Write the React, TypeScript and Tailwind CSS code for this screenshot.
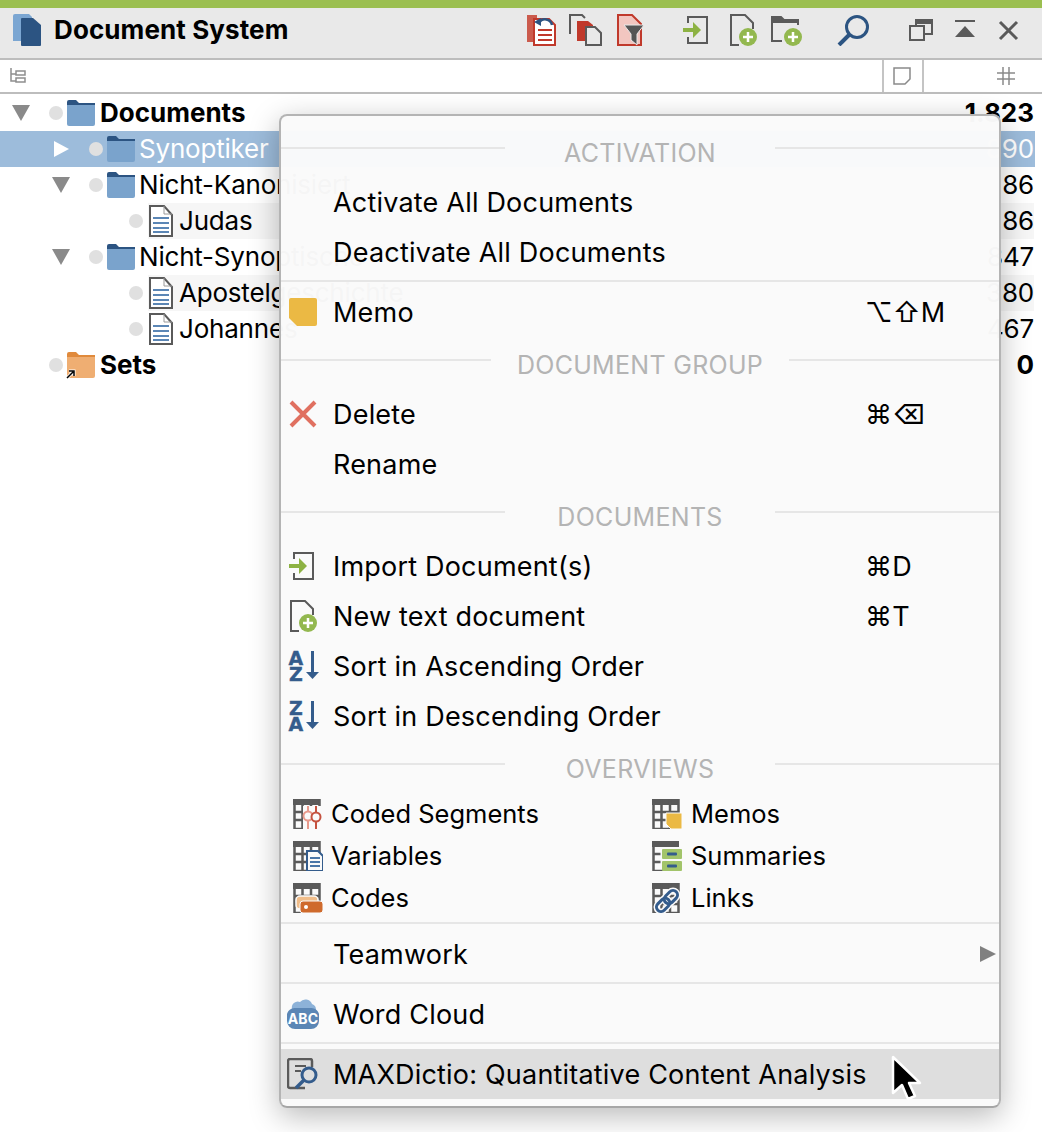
import type { ReactNode } from "react";

function Folder({ tab = "#2c5482", body = "#7aa3cc", shortcut }: { tab?: string; body?: string; shortcut?: boolean }) {
  return (
    <svg width="28" height="26" viewBox="0 0 28 26" className="shrink-0 overflow-visible">
      <path d="M0 6V2a2 2 0 0 1 2-2h7l3 3h16v4H0z" fill={tab} />
      <path d="M0 5h28v19a2 2 0 0 1-2 2H2a2 2 0 0 1-2-2z" fill={body} />
      {shortcut && (
        <>
          <path d="M0 26l6-6M2 19h5v5" fill="none" stroke="#fff" strokeWidth="3" />
          <path d="M0 26l6-6M2 19h5v5" fill="none" stroke="#000" strokeWidth="1.5" />
        </>
      )}
    </svg>
  );
}

function DocIcon() {
  return (
    <svg width="24" height="32" viewBox="0 0 24 32" className="shrink-0">
      <path d="M1 1h14l8 9v21H1z" fill="#fff" stroke="#5a5a5a" strokeWidth="2" />
      <path d="M15 1v8h8" fill="none" stroke="#9a9a9a" strokeWidth="1" />
      <path d="M4 13h16M4 18h16M4 23h16M4 27h16" stroke="#5b86b5" strokeWidth="2" />
    </svg>
  );
}

function TreeRow({
  indent,
  arrow,
  icon,
  label,
  count,
  bold,
  selected,
  doc,
  striped,
}: {
  indent: number;
  arrow?: "down" | "right";
  icon: ReactNode;
  label: string;
  count: string;
  bold?: boolean;
  selected?: boolean;
  doc?: boolean;
  striped?: boolean;
}) {
  return (
    <div
      className={`flex items-center h-[36px] pr-[1px] ${selected ? "bg-[#9dbcdb] text-white" : "text-black"} ${bold ? "font-bold tracking-normal" : ""}`}
    >
      <div className="flex items-center shrink-0" style={{ marginLeft: indent }}>
        <span className="w-[49px] flex pl-[12px] shrink-0">
          {arrow === "down" && (
            <span className="block w-0 h-0 border-l-[9px] border-r-[9px] border-t-[16px] border-l-transparent border-r-transparent border-t-[#8a8a8a]" />
          )}
          {arrow === "right" && (
            <span className="block w-0 h-0 ml-[2px] border-t-[8px] border-b-[8px] border-l-[15px] border-t-transparent border-b-transparent border-l-white" />
          )}
        </span>
        <span className="w-[14px] h-[14px] rounded-full bg-[#e0e0e0] shrink-0" />
      </div>
      <div
        className={`flex-1 flex items-center h-full min-w-0 ${doc ? "ml-[5px] pl-[1px]" : "ml-[4px]"} ${striped ? "bg-[#f6f6f6]" : ""}`}
      >
        {icon}
        <span className={`whitespace-nowrap ${doc ? "ml-[6px]" : bold ? "ml-[5px]" : "ml-[4px]"}`}>{label}</span>
        <span className="ml-auto">{count}</span>
      </div>
    </div>
  );
}

function SectionHeader({ title, first }: { title: string; first?: boolean }) {
  return (
    <div className={`flex items-center h-[48px] ${first ? "mt-[13px]" : "mt-[4px]"}`}>
      <div className="flex-1 h-[2px] bg-[#e6e6e6] mb-[10px]" />
      <div className="min-w-[270px] px-[26px] shrink-0 text-center text-[#b4b4b4] text-[25px] tracking-[0.3px] whitespace-nowrap">
        {title}
      </div>
      <div className="flex-1 h-[2px] bg-[#e6e6e6] mb-[10px]" />
    </div>
  );
}

function Separator() {
  return <div className="h-[2px] bg-[#e6e6e6] mt-[3px] mb-[5px]" />;
}

function Item({
  icon,
  label,
  shortcut,
  hovered,
  children,
}: {
  icon?: ReactNode;
  label: string;
  shortcut?: string;
  hovered?: boolean;
  children?: ReactNode;
}) {
  return (
    <div className={`flex items-center h-[50px] text-black text-[27px] tracking-[0.2px] ${hovered ? "bg-[#dedede]" : ""}`}>
      <span className="w-[52px] pl-[6px] shrink-0 flex items-center">{icon}</span>
      <span className="flex-1 whitespace-nowrap">{label}</span>
      {shortcut && (
        <span className="w-[134px] shrink-0 whitespace-nowrap font-['Inter','DejaVu_Sans',sans-serif]">
          {shortcut}
        </span>
      )}
      {children}
    </div>
  );
}

function GridFrame({ children, plain }: { children?: ReactNode; plain?: boolean }) {
  return (
    <svg width="30" height="30" viewBox="0 0 30 30" className="shrink-0">
      <path d="M0 0h27v6H0z" fill="#5a5a5a" />
      <path
        d={plain ? "M1.5 0v30h26M1.5 13h7M1.5 21h7" : "M1.5 0v30h25V0M1.5 13h25M1.5 21h25M9.5 0v30M18 0v30"}
        fill="none"
        stroke="#5a5a5a"
        strokeWidth="2.5"
      />
      {children}
    </svg>
  );
}

function Overview({ icon, label, right }: { icon: ReactNode; label: string; right?: boolean }) {
  return (
    <div className="flex items-center h-[42px] pl-[12px] text-black">
      <span className={`${right ? "w-[39px]" : "w-[38px]"} shrink-0 flex`}>{icon}</span>
      <span className="text-[25.5px] tracking-normal whitespace-nowrap">{label}</span>
    </div>
  );
}

const plusBadge = (cx: number, cy: number) => (
  <>
    <circle cx={cx} cy={cy} r="9" fill="#93b84f" />
    <path d={`M${cx - 5} ${cy}h10M${cx} ${cy - 5}v10`} stroke="#fff" strokeWidth="2.5" />
  </>
);

function ImportIcon() {
  return (
    <svg width="25" height="28" viewBox="0 0 25 28">
      <path d="M5 7V1h19v26H5v-6" fill="none" stroke="#5a5a5a" strokeWidth="2" />
      <path d="M0 12h10V6l8 8-8 8v-6H0z" fill="#8db243" />
    </svg>
  );
}

function NewDocIcon() {
  return (
    <svg width="30" height="32" viewBox="0 0 30 32">
      <path d="M10 31H2V1h14l8 8v6" fill="none" stroke="#5a5a5a" strokeWidth="2" />
      {plusBadge(19, 23)}
    </svg>
  );
}

function SortIcon({ top, bottom }: { top: string; bottom: string }) {
  return (
    <svg width="32" height="32" viewBox="0 0 32 32" className="ml-[1px] overflow-visible">
      <g fill="#345c8c" fontSize="19" fontWeight="700" fontFamily="'DejaVu Sans', sans-serif" textAnchor="middle" stroke="#345c8c" strokeWidth="0.4">
        <text x="8" y="14.5">{top}</text>
        <text x="8" y="30.5">{bottom}</text>
      </g>
      <path d="M24.5 1v24" stroke="#345c8c" strokeWidth="3" />
      <path d="M18 22h13l-6.5 7z" fill="#345c8c" />
    </svg>
  );
}

export default function App() {
  return (
    <div className="relative w-[1042px] h-[1132px] bg-white overflow-hidden text-[26px] leading-none font-['Inter',sans-serif] tracking-[-0.2px]">
      <div className="h-[8px] bg-[#9bbf50]" />
      {/* toolbar */}
      <div className="h-[52px] pb-[6px] bg-[#e9e9e9] border-b-2 border-[#bdbdbd] flex items-center">
        <svg width="30" height="32" viewBox="0 0 30 32" className="ml-[13px] shrink-0">
          <path d="M0 2a2 2 0 0 1 2-2h14l3 3v24H0z" fill="#7ba6d2" />
          <path d="M8 5a1 1 0 0 1 1-1h11l8 7v20a1 1 0 0 1-1 1H9a1 1 0 0 1-1-1z" fill="#2c5482" />
        </svg>
        <span className="ml-[11px] font-bold tracking-[0.1px] text-black whitespace-nowrap">Document System</span>
        <div className="flex-1" />
        <svg width="30" height="32" viewBox="0 0 30 32" className="mr-[12px] shrink-0">
          <rect x="0" y="1" width="10" height="27" fill="#cb5b4d" />
          <path d="M7 5h15l6 6v20H7z" fill="#fff" stroke="#c0392b" strokeWidth="2" />
          <path d="M11 16h14M11 21h14M11 26h14" stroke="#c0392b" strokeWidth="2" />
          <path d="M12 9a7 7 0 0 1 13 2" fill="none" stroke="#2c5482" strokeWidth="2.5" />
          <path d="M7 8l7-4v8z" fill="#2c5482" />
        </svg>
        <svg width="33" height="32" viewBox="0 0 33 32" className="mr-[15px] shrink-0">
          <path d="M1 20V1h12l3 3" fill="none" stroke="#5a5a5a" strokeWidth="2" />
          <path d="M8 7h11l5 4v16H8z" fill="#c0392b" />
          <path d="M17 13h9l6 6v12H17z" fill="#e9e9e9" stroke="#5a5a5a" strokeWidth="2" />
        </svg>
        <svg width="28" height="32" viewBox="0 0 28 32" className="mr-[38px] shrink-0">
          <path d="M1 1h14l9 9v21H1z" fill="#f2c6c0" stroke="#c0392b" strokeWidth="2" />
          <path d="M7 11h20l-7 9v11l-6-5v-6z" fill="#555" stroke="#e9e9e9" strokeWidth="1" />
        </svg>
        <span className="mr-[21px] flex"><ImportIcon /></span>
        <span className="mr-[12px] flex"><NewDocIcon /></span>
        <svg width="31" height="32" viewBox="0 0 31 32" className="mr-[35px] shrink-0">
          <path d="M11 27H1V3h9l3 3h14v5" fill="none" stroke="#5a5a5a" strokeWidth="2" />
          <path d="M1 3h9l3 3h14v3H1z" fill="#5a5a5a" />
          {plusBadge(22, 23)}
        </svg>
        <svg width="33" height="32" viewBox="0 0 33 32" className="mr-[39px] shrink-0">
          <circle cx="20" cy="13" r="10.5" fill="none" stroke="#2c5482" strokeWidth="3" />
          <path d="M12 21L2 31" stroke="#2c5482" strokeWidth="4" />
        </svg>
        <svg width="24" height="22" viewBox="0 0 24 22" className="mr-[21px] shrink-0">
          <path d="M7 7V1h16v14h-8M1 7h14v14H1z" fill="none" stroke="#5a5a5a" strokeWidth="2" />
          <path d="M7 1h16v4H7z" fill="#5a5a5a" />
        </svg>
        <svg width="22" height="20" viewBox="0 0 22 20" className="mr-[22px] shrink-0">
          <path d="M1 1h20" stroke="#5a5a5a" strokeWidth="2" />
          <path d="M11 6l10 11H1z" fill="#5a5a5a" />
        </svg>
        <svg width="21" height="21" viewBox="0 0 21 21" className="mr-[23px] shrink-0">
          <path d="M2 2l17 17M19 2L2 19" stroke="#5a5a5a" strokeWidth="3" />
        </svg>
      </div>
      {/* column header */}
      <div className="h-[34px] border-b-2 border-[#bdbdbd] flex">
        <div className="flex-1 flex items-center pl-[10px]">
          <svg width="16" height="16" viewBox="0 0 16 16">
            <path d="M1 0v13h5M1 6h5M6 3h9v4H6zM6 10h9v4H6z" fill="none" stroke="#8f8f8f" strokeWidth="1.5" />
          </svg>
        </div>
        <div className="w-[40px] border-l-2 border-[#c4c4c4] flex items-center justify-center">
          <svg width="18" height="18" viewBox="0 0 18 18" className="mr-[2px]">
            <path d="M1 1h16v11l-5 5H1z" fill="none" stroke="#8a8a8a" strokeWidth="1.5" />
          </svg>
        </div>
        <div className="w-[120px] border-l-2 border-[#c4c4c4] flex items-center justify-end pr-[27px]">
          <svg width="18" height="18" viewBox="0 0 18 18">
            <path d="M6 0v18M12 0v18M0 6h18M0 12h18" stroke="#8a8a8a" strokeWidth="1.5" />
          </svg>
        </div>
      </div>
      {/* tree */}
      <div className="pt-[1px] w-[1035px]">
        <TreeRow indent={0} arrow="down" icon={<Folder />} label="Documents" count="1.823" bold />
        <TreeRow indent={40} arrow="right" icon={<Folder />} label="Synoptiker" count="890" selected />
        <TreeRow indent={40} arrow="down" icon={<Folder />} label="Nicht-Kanonisiert" count="86" />
        <TreeRow indent={80} icon={<DocIcon />} label="Judas" count="86" doc striped />
        <TreeRow indent={40} arrow="down" icon={<Folder />} label="Nicht-Synoptische" count="847" />
        <TreeRow indent={80} icon={<DocIcon />} label="Apostelgeschichte" count="380" doc striped />
        <TreeRow indent={80} icon={<DocIcon />} label="Johannes" count="467" doc />
        <TreeRow indent={0} icon={<Folder tab="#e08a3c" body="#efae72" shortcut />} label="Sets" count="0" bold />
      </div>
      {/* context menu */}
      <div className="absolute left-[279px] top-[114px] w-[722px] h-[994px] bg-[#fafafa]/[0.98] border-2 border-[#b4b4b4] border-b-[#a6a6a6] rounded-[8px] shadow-[0_8px_30px_rgba(0,0,0,0.28)] overflow-hidden">
        <SectionHeader title="ACTIVATION" first />
        <Item label="Activate All Documents" />
        <Item label="Deactivate All Documents" />
        <Separator />
        <Item
          icon={
            <svg width="28" height="28" viewBox="0 0 28 28" className="ml-[2px]">
              <path d="M2 0h24a2 2 0 0 1 2 2v24a2 2 0 0 1-2 2H8l-8-8V2a2 2 0 0 1 2-2z" fill="#ebb944" />
            </svg>
          }
          label="Memo"
          shortcut="⌥⇧M"
        />
        <SectionHeader title="DOCUMENT GROUP" />
        <Item
          icon={
            <svg width="28" height="28" viewBox="0 0 28 28" className="ml-[2px]">
              <path d="M2 2l24 24M26 2L2 26" stroke="#e07060" strokeWidth="4" />
            </svg>
          }
          label="Delete"
          shortcut="⌘⌫"
        />
        <Item label="Rename" />
        <SectionHeader title="DOCUMENTS" />
        <Item icon={<span className="ml-[2px] flex"><ImportIcon /></span>} label="Import Document(s)" shortcut="⌘D" />
        <Item icon={<span className="ml-[2px] flex"><NewDocIcon /></span>} label="New text document" shortcut="⌘T" />
        <Item icon={<SortIcon top="A" bottom="Z" />} label="Sort in Ascending Order" />
        <Item icon={<SortIcon top="Z" bottom="A" />} label="Sort in Descending Order" />
        <SectionHeader title="OVERVIEWS" />
        <div className="grid grid-cols-2">
          <Overview
            label="Coded Segments"
            icon={
              <GridFrame>
                <rect x="10" y="7" width="20" height="23" fill="#fafafa" />
                <path d="M15 7v23" stroke="#e89a8c" strokeWidth="2" />
                <path d="M23 7v23" stroke="#c5523f" strokeWidth="2" />
                <circle cx="15" cy="17" r="4.5" fill="#fafafa" stroke="#e89a8c" strokeWidth="2" />
                <circle cx="23" cy="18" r="4.5" fill="#fafafa" stroke="#c5523f" strokeWidth="2" />
              </GridFrame>
            }
          />
          <Overview
            right
            label="Memos"
            icon={
              <GridFrame>
                <path d="M14 14h16v16H19l-5-5z" fill="#ebb944" stroke="#fafafa" strokeWidth="1" />
              </GridFrame>
            }
          />
          <Overview
            label="Variables"
            icon={
              <GridFrame>
                <path d="M14 10h11l5 5v15H14z" fill="#fafafa" stroke="#345c8c" strokeWidth="2" />
                <path d="M17 17h10M17 21h10M17 25h10" stroke="#4a76a8" strokeWidth="2" />
              </GridFrame>
            }
          />
          <Overview
            right
            label="Summaries"
            icon={
              <GridFrame plain>
                <rect x="10" y="8" width="20" height="10" rx="1" fill="#a2c46a" />
                <rect x="10" y="20" width="20" height="10" rx="1" fill="#a2c46a" />
                <rect x="15" y="11.5" width="10" height="3" rx="1" fill="#345c8c" />
                <rect x="15" y="23.5" width="10" height="3" rx="1" fill="#345c8c" />
              </GridFrame>
            }
          />
          <Overview
            label="Codes"
            icon={
              <GridFrame>
                <rect x="3" y="13" width="22" height="13" rx="4" fill="#f0bd8a" stroke="#fafafa" strokeWidth="1.5" />
                <rect x="7" y="18" width="23" height="12" rx="3" fill="#cf6a2c" stroke="#fafafa" strokeWidth="1" />
                <circle cx="13" cy="24" r="2" fill="#fff" />
              </GridFrame>
            }
          />
          <Overview
            right
            label="Links"
            icon={
              <GridFrame>
                <g fill="none" transform="rotate(-45 15 18)">
                  <rect x="2" y="13.5" width="15" height="9" rx="4.5" stroke="#fafafa" strokeWidth="6" />
                  <rect x="13" y="13.5" width="15" height="9" rx="4.5" stroke="#fafafa" strokeWidth="6" />
                  <rect x="2" y="13.5" width="15" height="9" rx="4.5" stroke="#345c8c" strokeWidth="3" />
                  <rect x="13" y="13.5" width="15" height="9" rx="4.5" stroke="#345c8c" strokeWidth="3" />
                </g>
              </GridFrame>
            }
          />
        </div>
        <Separator />
        <Item label="Teamwork">
          <span className="block w-0 h-0 mr-[3px] border-t-[8px] border-b-[8px] border-l-[16px] border-t-transparent border-b-transparent border-l-[#808080]" />
        </Item>
        <Separator />
        <Item
          icon={
            <svg width="32" height="32" viewBox="0 0 32 32">
              <path d="M5 11a6 6 0 0 1 8-7 7 7 0 0 1 12 2 6 6 0 0 1 4 6H5z" fill="#8db2d8" />
              <path d="M8 10h16a8 8 0 0 1 8 10v3a8 8 0 0 1-8 8H8a8 8 0 0 1-8-8v-3a8 8 0 0 1 8-10z" fill="#5b86b5" />
              <text x="16" y="26" textAnchor="middle" fontSize="14" fontWeight="700" fill="#fff" fontFamily="Inter, sans-serif">ABC</text>
            </svg>
          }
          label="Word Cloud"
        />
        <Separator />
        <Item
          hovered
          icon={
            <svg width="32" height="32" viewBox="0 0 32 32">
              <path d="M8 30H3a2 2 0 0 1-2-2V3a2 2 0 0 1 2-2h20a2 2 0 0 1 2 2v6M18 30H8" fill="none" stroke="#5a5a5a" strokeWidth="2.5" />
              <path d="M8 8h11M8 13h6" stroke="#5a5a5a" strokeWidth="2" />
              <circle cx="22" cy="17" r="7" fill="none" stroke="#345c8c" strokeWidth="3" />
              <path d="M17 22l-8 8" stroke="#345c8c" strokeWidth="3.5" />
            </svg>
          }
          label="MAXDictio: Quantitative Content Analysis"
        />
      </div>
      {/* mouse pointer */}
      <svg width="34" height="48" viewBox="0 0 34 48" className="absolute left-[890px] top-[1055px]">
        <path d="M3 2v36l9-8 6 14 7-3-6-13h11z" fill="#000" stroke="#fff" strokeWidth="2.5" strokeLinejoin="round" />
      </svg>
    </div>
  );
}
